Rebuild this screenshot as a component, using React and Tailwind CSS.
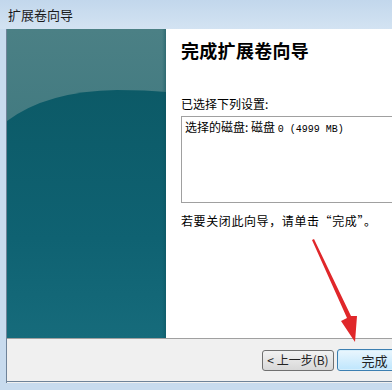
export default function App() {
  return (
    <div className="relative w-[392px] h-[390px] overflow-hidden bg-[#c8dbee] font-['Noto_Sans_CJK_SC',sans-serif] text-black">
      {/* title bar */}
      <div className="h-[29px] flex items-center pl-[8px] bg-gradient-to-b from-[#c2d7ec] to-[#d3e3f2] text-[13px] text-[#1a1a1a]">
        扩展卷向导
      </div>

      <div className="ml-[6px] h-[354px] border-l border-[#6f8399] bg-[#f0f0f0] flex flex-col">
        <div className="h-[309px] flex">
          <WizardSide />
          <div className="flex-1 bg-white pl-[15px] pt-[8px] flex flex-col">
            <div className="text-[18px] font-bold leading-[26px] tracking-[0.3px]">完成扩展卷向导</div>
            <div className="mt-[33px] text-[12px] leading-[16px]">已选择下列设置:</div>
            <div className="mt-[4px] h-[87px] border border-[#a0a0a0] border-r-0 pl-[3px] pt-[2px] text-[12px] leading-[16px]">
              选择的磁盘: 磁盘 <span className="font-['Liberation_Mono',monospace] text-[10px]">0 (4999 MB)</span>
            </div>
            <div className="mt-[10px] text-[12px] leading-[16px] tracking-[0.6px]">若要关闭此向导，请单击“完成”。</div>
          </div>
        </div>
        <div className="h-px bg-[#a0a0a0]" />
        <div className="h-[42px] flex items-center pl-[255px] gap-[3px]">
          <button className="shrink-0 w-[72px] h-[21px] rounded-[3px] border border-[#707070] bg-gradient-to-b from-[#f2f2f2] to-[#d8d8d8] text-[12px] leading-none text-[#222]">
            &lt; 上一步(B)
          </button>
          <button className="shrink-0 w-[75px] h-[22px] rounded-[3px] border border-[#3c7fb1] bg-gradient-to-b from-[#eaf6fd] to-[#bee6fd] text-[13px] leading-none text-[#222] shadow-[inset_0_0_0_1px_#d6eefb]">
            完成
          </button>
        </div>
        <div className="flex-1 border-t border-[#6f8399]" />
      </div>

      {/* annotation arrow */}
      <svg className="absolute left-0 top-0 pointer-events-none" width="392" height="390" viewBox="0 0 392 390">
        <path d="M312 240 L347 318 L341 321 L355 342 L357 316 L351 316 L314 239 Z" fill="#e0272a" />
      </svg>
    </div>
  );
}

function WizardSide() {
  return (
    <div className="w-[159px] shrink-0 relative overflow-hidden">
      <svg width="159" height="309" viewBox="0 0 159 309" className="block">
        <defs>
          <linearGradient id="top" x1="0" y1="0" x2="0" y2="1">
            <stop offset="0" stopColor="#4b8085" />
            <stop offset="1" stopColor="#2f6e77" />
          </linearGradient>
          <linearGradient id="low" x1="0" y1="0" x2="0" y2="1">
            <stop offset="0" stopColor="#0c5a67" />
            <stop offset="0.6" stopColor="#0f6272" />
            <stop offset="1" stopColor="#166b7b" />
          </linearGradient>
        </defs>
        <rect width="159" height="309" fill="url(#top)" />
        <path d="M0 92 Q40 62 110 61 Q140 61 159 63 L159 309 L0 309 Z" fill="url(#low)" />
      </svg>
      <div className="absolute right-0 top-0 bottom-0 w-[4px] bg-gradient-to-r from-transparent to-[#0a4d58]/40" />
    </div>
  );
}
